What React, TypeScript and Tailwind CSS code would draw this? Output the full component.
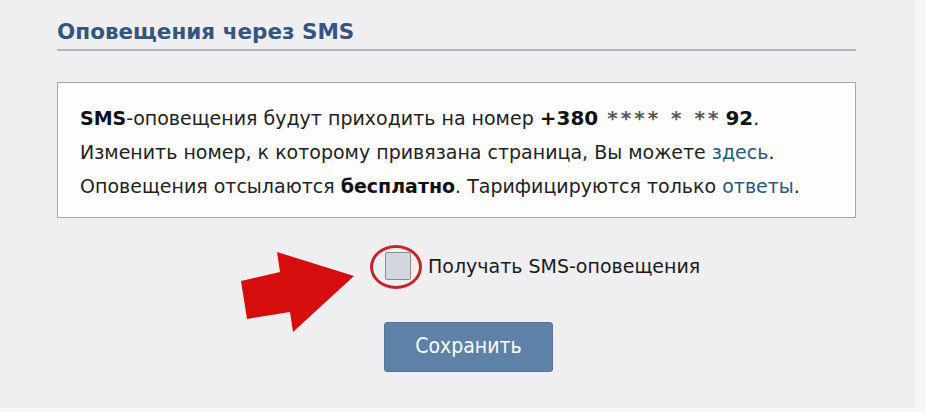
import React from 'react';

export default function App() {
  return (
    <div className="w-[926px] h-[412px] bg-[#efeff1] overflow-hidden relative font-['DejaVu_Sans',sans-serif]">
      <div className="w-[799px] ml-[57px] pt-[18px]">
        {/* Header */}
        <div className="border-b-2 border-[#b4b5bb] pb-[3px]">
          <h2 className="text-[21.5px] leading-[28px] font-bold text-[#34557d]">Оповещения через SMS</h2>
        </div>

        {/* Info box */}
        <div className="mt-[31px] bg-[#fdfdfe] border border-[#a6a6a8] pt-[18px] pb-[14px] px-[22px] text-[19px] leading-[34px] text-[#222] whitespace-nowrap">
          <p>
            <b className="text-[#111]">SMS</b>-оповещения будут приходить на номер{' '}
            <b className="text-[#111] text-[20px]">
              +380<span className="ml-[9px] mr-[4px] text-[#555] tracking-[3px]">**** * **</span>92
            </b>.
          </p>
          <p>
            Изменить номер, к которому привязана страница, Вы можете <a className="text-[#2b587a]">здесь</a>.
          </p>
          <p>
            Оповещения отсылаются <b className="text-[#111]">бесплатно</b>. Тарифицируются только <a className="text-[#2b587a]">ответы</a>.
          </p>
        </div>

        {/* Checkbox row */}
        <div className="ml-[328px] mt-[34px] flex items-center gap-[17px]">
          <div className="relative w-[26px] h-[28px] bg-[#d3d7dd] border border-[#8a8c90] rounded-[2px]">
            <div className="absolute -left-[16px] -top-[8px] w-[52px] h-[44px] rounded-[50%] border-[3px] border-[#c3242a]" />
          </div>
          <span className="text-[19px] leading-[28px] text-[#1a1a1a]">Получать SMS-оповещения</span>
        </div>

        {/* Save button */}
        <div className="ml-[327px] mt-[42px]">
          <button className="w-[169px] h-[50px] bg-[#5e81a8] border border-[#54769c] rounded-[3px] text-white text-[21px] font-['DejaVu_Sans_Condensed',sans-serif]">
            Сохранить
          </button>
        </div>
      </div>

      {/* Red arrow annotation */}
      <svg className="absolute left-[236px] top-[248px]" width="124" height="90" viewBox="236 248 124 90">
        <polygon
          points="241,281 280,272 277,252 354,276 293,332 290,312 247,319"
          fill="#d50d0d"
        />
      </svg>

      {/* right/bottom light edges */}
      <div className="absolute right-0 top-0 w-[11px] h-full bg-[#f6f6f7]" />
      <div className="absolute left-0 bottom-0 w-full h-[4px] bg-[#f8f8f9]" />
    </div>
  );
}
